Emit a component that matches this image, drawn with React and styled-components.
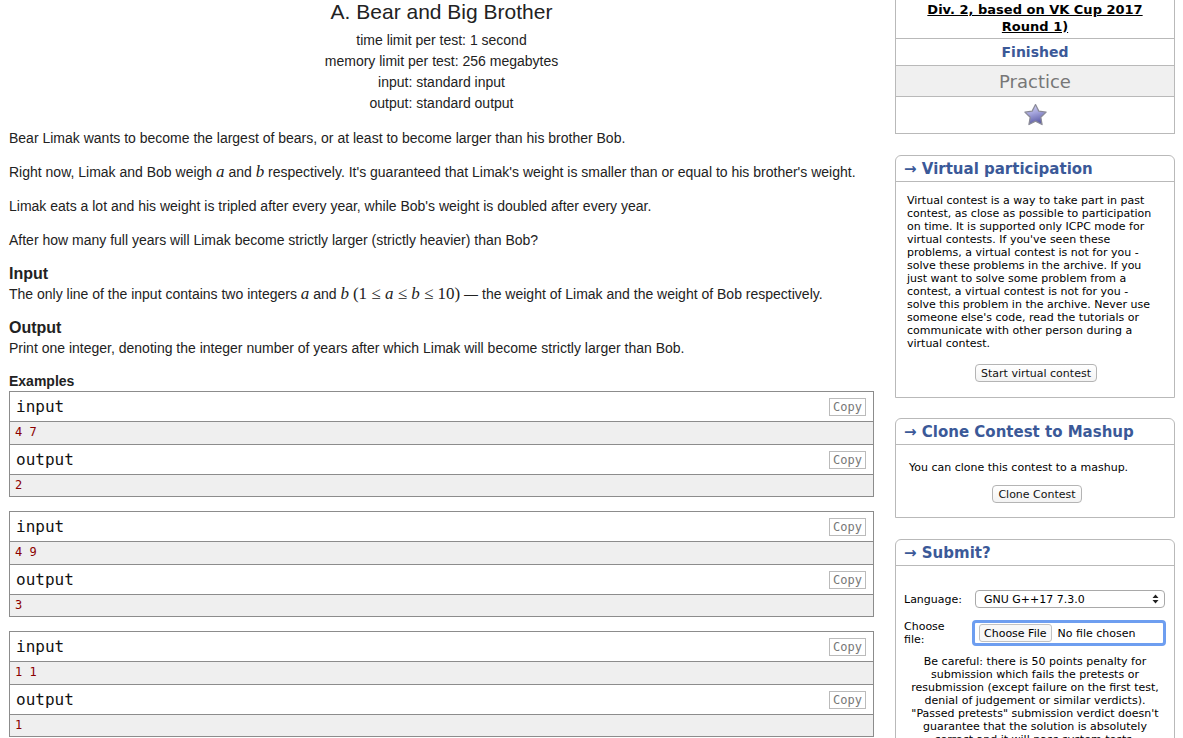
import React from 'react';
import styled, { createGlobalStyle } from 'styled-components';

const GlobalStyle = createGlobalStyle`
  html, body { margin: 0; padding: 0; background: #fff; }
  body { font-family: "Liberation Sans", Arial, sans-serif; color: #222; }
  * { box-sizing: border-box; }
`;

const Page = styled.div`
  display: flex;
  align-items: flex-start;
  gap: 21px;
  padding: 0 8px 0 9px;
  width: 1183px;
`;

const Main = styled.main`
  width: 865px;
  flex: none;
`;

const Sidebar = styled.aside`
  width: 280px;
  flex: none;
  font-family: "DejaVu Sans", Verdana, sans-serif;
  color: #000;
`;

/* ---------- problem header ---------- */
const Header = styled.header`
  text-align: center;
  color: #222;
`;
const Title = styled.div`
  font-size: 21px;
  line-height: 24px;
`;
const MetaList = styled.div`
  margin-top: 6px;
`;
const Meta = styled.div`
  font-size: 14px;
  line-height: 21px;
`;

/* ---------- statement ---------- */
const Statement = styled.section`
  margin-top: 14px;
`;
const Para = styled.p`
  margin: 0 0 14px;
  font-size: 14px;
  line-height: 20px;
`;
const Var = styled.span`
  font-family: "Liberation Serif", "Times New Roman", serif;
  font-style: ${(p) => (p.$upright ? 'normal' : 'italic')};
  font-size: 17px;
`;
const Section = styled.div`
  margin-bottom: 14px;
`;
const SectionTitle = styled.div`
  font-weight: bold;
  font-size: ${(p) => (p.$small ? '14px' : '16px')};
  line-height: 20px;
  margin-top: ${(p) => p.$mt || 0}px;
`;
const SectionText = styled.div`
  font-size: 14px;
  line-height: 20px;
`;

/* ---------- examples ---------- */
const ExampleBox = styled.div`
  border: 1px solid #8c8c8c;
  margin-bottom: 14px;
`;
const ExHeader = styled.div`
  height: 30px;
  display: flex;
  align-items: center;
  justify-content: space-between;
  padding: 0 7px 0 6px;
  border-bottom: 1px solid #8c8c8c;
  font-family: "DejaVu Sans Mono", "Liberation Mono", monospace;
  font-size: 16px;
  color: #111;
`;
const CopyBtn = styled.span`
  display: inline-flex;
  align-items: center;
  height: 18px;
  padding: 0 3px;
  border: 1px solid #bbb;
  font-family: "DejaVu Sans Mono", "Liberation Mono", monospace;
  font-size: 12px;
  color: #777;
`;
const ExData = styled.pre`
  margin: 0;
  height: ${(p) => (p.$last ? 21 : 23)}px;
  line-height: 21px;
  padding-left: 5px;
  background: #efefef;
  font-family: "DejaVu Sans Mono", "Liberation Mono", monospace;
  font-size: 12px;
  color: #8b0000;
  border-bottom: ${(p) => (p.$last ? 'none' : '1px solid #8c8c8c')};
`;

/* ---------- sidebar ---------- */
const RTable = styled.div`
  border: 1px solid #b9b9b9;
  border-top: none;
  text-align: center;
`;
const NameRow = styled.div`
  padding: 1px 6px 3px;
  font-size: 13px;
  font-weight: bold;
  line-height: 17px;
  a { color: #000; text-decoration: underline; }
`;
const StatusRow = styled.div`
  border-top: 1px solid #b9b9b9;
  height: ${(p) => p.$h}px;
  display: flex;
  align-items: center;
  justify-content: center;
  background: ${(p) => (p.$gray ? '#f0f0f0' : '#fff')};
  font-size: ${(p) => (p.$big ? '18px' : '14px')};
  font-weight: ${(p) => (p.$bold ? 'bold' : 'normal')};
  color: ${(p) => p.$color || '#000'};
`;

const RoundBox = styled.div`
  margin-top: ${(p) => p.$mt}px;
  border: 1px solid #b9b9b9;
  border-radius: 6px 6px 0 0;
`;
const Caption = styled.div`
  height: 26px;
  line-height: 26px;
  padding-left: 8px;
  border-bottom: 1px solid #b9b9b9;
  font-size: 15px;
  font-weight: bold;
  color: #3b5998;
`;
const BoxBody = styled.div`
  padding: ${(p) => p.$pad};
  font-size: 11px;
  line-height: 13px;
`;
const Line = styled.div`
  white-space: nowrap;
`;
const BtnRow = styled.div`
  display: flex;
  justify-content: center;
  margin-top: ${(p) => p.$mt}px;
`;
const Button = styled.span`
  display: inline-flex;
  align-items: center;
  height: 18px;
  padding: 0 5px;
  border: 1px solid #b4b4b4;
  border-radius: 4px;
  background: linear-gradient(#fff, #f3f3f3);
  font-size: 11px;
  color: #111;
`;

const FormGrid = styled.div`
  display: grid;
  grid-template-columns: 71px 1fr;
  row-gap: 12px;
  align-items: center;
  padding: 24px 9px 0 8px;
  font-size: 11px;
  line-height: 13px;
`;
const SelectBox = styled.div`
  position: relative;
  width: 190px;
  height: 18px;
  border: 1px solid #a9a9a9;
  border-radius: 4px;
  padding-left: 8px;
  display: flex;
  align-items: center;
  font-size: 11px;
  background: #fff;
`;
const SelectArrows = styled.svg`
  position: absolute;
  right: 5px;
  top: 3px;
`;
const FileInput = styled.div`
  width: 194px;
  height: 26px;
  margin-left: -3px;
  border: 3px solid #6e9ef0;
  border-radius: 4px;
  display: flex;
  align-items: center;
  padding-left: 4px;
  font-size: 11px;
`;
const FileBtn = styled.span`
  display: inline-flex;
  align-items: center;
  height: 18px;
  padding: 0 4px;
  border: 1px solid #c2c2c2;
  border-radius: 3px;
  background: #f8f8f8;
  margin-right: 6px;
`;
const Warning = styled.div`
  padding: 9px 4px 0;
  font-size: 11px;
  line-height: 13px;
  text-align: center;
`;

const Star = () => (
  <svg width="25" height="25" viewBox="0 0 24 24">
    <defs>
      <linearGradient id="starg" x1="0" y1="0" x2="0.3" y2="1">
        <stop offset="0" stopColor="#e0e0f8" />
        <stop offset="0.5" stopColor="#a4a4dc" />
        <stop offset="1" stopColor="#5f5fa8" />
      </linearGradient>
    </defs>
    <polygon
      points="12,1.5 15.2,7.8 22.2,8.8 17.1,13.7 18.3,20.7 12,17.4 5.7,20.7 6.9,13.7 1.8,8.8 8.8,7.8"
      fill="url(#starg)"
      stroke="#8a8a98"
      strokeWidth="1.2"
      strokeLinejoin="round"
    />
  </svg>
);

const examples = [
  ['4 7', '2'],
  ['4 9', '3'],
  ['1 1', '1'],
];

const virtualLines = [
  'Virtual contest is a way to take part in past',
  'contest, as close as possible to participation',
  'on time. It is supported only ICPC mode for',
  "virtual contests. If you've seen these",
  'problems, a virtual contest is not for you -',
  'solve these problems in the archive. If you',
  'just want to solve some problem from a',
  'contest, a virtual contest is not for you -',
  'solve this problem in the archive. Never use',
  "someone else's code, read the tutorials or",
  'communicate with other person during a',
  'virtual contest.',
];

const warningLines = [
  'Be careful: there is 50 points penalty for',
  'submission which fails the pretests or',
  'resubmission (except failure on the first test,',
  'denial of judgement or similar verdicts).',
  '"Passed pretests" submission verdict doesn\'t',
  'guarantee that the solution is absolutely',
  'correct and it will pass system tests.',
];

export default function App() {
  return (
    <>
      <GlobalStyle />
      <Page>
        <Main>
          <Header>
            <Title>A. Bear and Big Brother</Title>
            <MetaList>
              <Meta>time limit per test: 1 second</Meta>
              <Meta>memory limit per test: 256 megabytes</Meta>
              <Meta>input: standard input</Meta>
              <Meta>output: standard output</Meta>
            </MetaList>
          </Header>
          <Statement>
            <Para>Bear Limak wants to become the largest of bears, or at least to become larger than his brother Bob.</Para>
            <Para>
              Right now, Limak and Bob weigh <Var>a</Var> and <Var>b</Var> respectively. It's guaranteed that Limak's weight is smaller than or equal to his brother's weight.
            </Para>
            <Para>Limak eats a lot and his weight is tripled after every year, while Bob's weight is doubled after every year.</Para>
            <Para>After how many full years will Limak become strictly larger (strictly heavier) than Bob?</Para>
            <Section>
              <SectionTitle>Input</SectionTitle>
              <SectionText>
                The only line of the input contains two integers <Var>a</Var> and <Var>b</Var>{' '}
                <Var $upright>(1 ≤ </Var><Var>a</Var><Var $upright> ≤ </Var><Var>b</Var><Var $upright> ≤ 10)</Var> — the weight of Limak and the weight of Bob respectively.
              </SectionText>
            </Section>
            <Section>
              <SectionTitle $mt={1}>Output</SectionTitle>
              <SectionText>Print one integer, denoting the integer number of years after which Limak will become strictly larger than Bob.</SectionText>
            </Section>
            <SectionTitle $small $mt={-1}>Examples</SectionTitle>
            {examples.map(([inp, out], i) => (
              <ExampleBox key={i}>
                <ExHeader>input<CopyBtn>Copy</CopyBtn></ExHeader>
                <ExData>{inp}</ExData>
                <ExHeader>output<CopyBtn>Copy</CopyBtn></ExHeader>
                <ExData $last>{out}</ExData>
              </ExampleBox>
            ))}
          </Statement>
        </Main>

        <Sidebar>
          <RTable>
            <NameRow>
              <a>Div. 2, based on VK Cup 2017<br />Round 1)</a>
            </NameRow>
            <StatusRow $h={27} $bold $color="#3b5998">Finished</StatusRow>
            <StatusRow $h={31} $gray $big $color="#777">Practice</StatusRow>
            <StatusRow $h={37}><Star /></StatusRow>
          </RTable>

          <RoundBox $mt={21}>
            <Caption>→ Virtual participation</Caption>
            <BoxBody $pad="12px 9px 15px 11px">
              {virtualLines.map((l, i) => <Line key={i}>{l}</Line>)}
              <BtnRow $mt={14}><Button>Start virtual contest</Button></BtnRow>
            </BoxBody>
          </RoundBox>

          <RoundBox $mt={20}>
            <Caption>→ Clone Contest to Mashup</Caption>
            <BoxBody $pad="16px 9px 14px 13px">
              <Line>You can clone this contest to a mashup.</Line>
              <BtnRow $mt={11}><Button>Clone Contest</Button></BtnRow>
            </BoxBody>
          </RoundBox>

          <RoundBox $mt={21}>
            <Caption>→ Submit?</Caption>
            <FormGrid>
              <span>Language:</span>
              <SelectBox>
                GNU G++17 7.3.0
                <SelectArrows width="7" height="10" viewBox="0 0 7 10">
                  <path d="M0.5 4 L3.5 0.5 L6.5 4 Z M0.5 6 L3.5 9.5 L6.5 6 Z" fill="#222" />
                </SelectArrows>
              </SelectBox>
              <span>Choose<br />file:</span>
              <FileInput>
                <FileBtn>Choose File</FileBtn>
                No file chosen
              </FileInput>
            </FormGrid>
            <Warning>
              {warningLines.map((l, i) => <Line key={i}>{l}</Line>)}
            </Warning>
          </RoundBox>
        </Sidebar>
      </Page>
    </>
  );
}
